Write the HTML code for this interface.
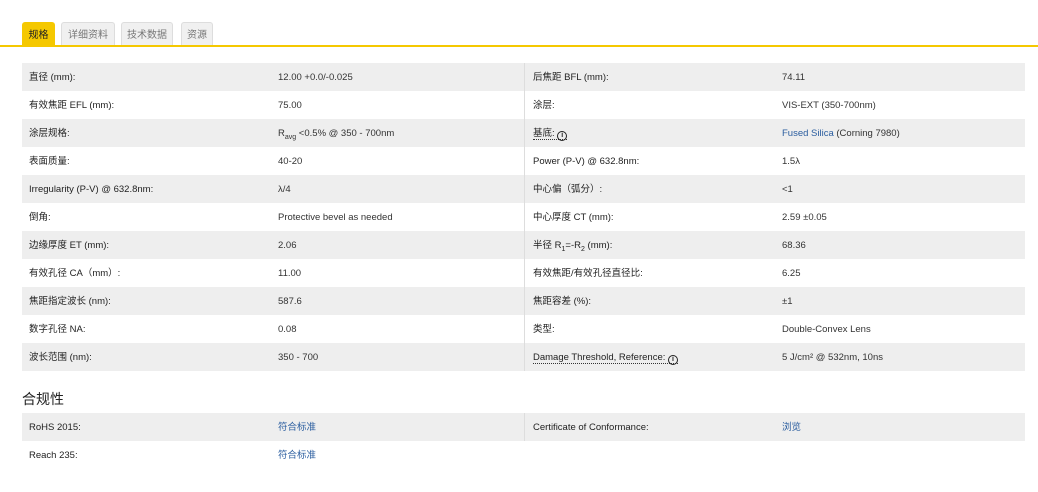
<!DOCTYPE html>
<html><head><meta charset="utf-8"><style>
body{margin:0;background:#fff;width:1038px;height:492px;overflow:hidden;font-family:"Liberation Sans","Noto Sans CJK SC",sans-serif;font-size:9.5px;color:#333}
.tabs{position:absolute;left:0;top:0;width:1038px;height:47px;border-bottom:2px solid #f5c800;box-sizing:border-box}
.tab{position:absolute;top:22px;height:23px;line-height:25px;background:#f0f0f0;border:1px solid #ddd;border-bottom:none;border-radius:3px 3px 0 0;color:#777;font-size:10px;text-align:center;box-sizing:border-box}
.tab.on{background:#f5c800;border-color:#f5c800;color:#222}
table{position:absolute;left:22px;border-collapse:collapse;width:1003px}
td{height:26px;padding:2px 0 0 0;vertical-align:middle;line-height:14px}
tr:nth-child(odd) td{background:#eee}
td.l{padding-left:7px;width:249px;color:#222}
td.v{width:246px}
td.l2{padding-left:8px;width:249px;border-left:1px solid #ddd;color:#222}
a{color:#2a5d9f;text-decoration:none}
.dot{border-bottom:1px dotted #333}
.i{display:inline-block;width:8px;height:8px;border:1.3px solid #222;border-radius:50%;font-size:7px;line-height:8px;text-align:center;font-weight:bold;vertical-align:-1px}
h3{position:absolute;left:22px;top:390px;margin:0;font-size:14px;line-height:18px;font-weight:normal;color:#222}
sub{font-size:7px;line-height:0}
</style></head><body>
<div class="tabs">
<div class="tab on" style="left:22px;width:33px">规格</div>
<div class="tab" style="left:61px;width:54px">详细资料</div>
<div class="tab" style="left:121px;width:52px">技术数据</div>
<div class="tab" style="left:181px;width:32px">资源</div>
</div>
<table style="top:63px">
<tr><td class="l">直径 (mm):</td><td class="v">12.00 +0.0/-0.025</td><td class="l2">后焦距 BFL (mm):</td><td>74.11</td></tr>
<tr><td class="l">有效焦距 EFL (mm):</td><td class="v">75.00</td><td class="l2">涂层:</td><td>VIS-EXT (350-700nm)</td></tr>
<tr><td class="l">涂层规格:</td><td class="v">R<sub>avg</sub> &lt;0.5% @ 350 - 700nm</td><td class="l2"><span class="dot">基底: <span class="i">i</span></span></td><td><a>Fused Silica</a> (Corning 7980)</td></tr>
<tr><td class="l">表面质量:</td><td class="v">40-20</td><td class="l2">Power (P-V) @ 632.8nm:</td><td>1.5λ</td></tr>
<tr><td class="l">Irregularity (P-V) @ 632.8nm:</td><td class="v">λ/4</td><td class="l2">中心偏（弧分）:</td><td>&lt;1</td></tr>
<tr><td class="l">倒角:</td><td class="v">Protective bevel as needed</td><td class="l2">中心厚度 CT (mm):</td><td>2.59 ±0.05</td></tr>
<tr><td class="l">边缘厚度 ET (mm):</td><td class="v">2.06</td><td class="l2">半径 R<sub>1</sub>=-R<sub>2</sub> (mm):</td><td>68.36</td></tr>
<tr><td class="l">有效孔径 CA（mm）:</td><td class="v">11.00</td><td class="l2">有效焦距/有效孔径直径比:</td><td>6.25</td></tr>
<tr><td class="l">焦距指定波长 (nm):</td><td class="v">587.6</td><td class="l2">焦距容差 (%):</td><td>±1</td></tr>
<tr><td class="l">数字孔径 NA:</td><td class="v">0.08</td><td class="l2">类型:</td><td>Double-Convex Lens</td></tr>
<tr><td class="l">波长范围 (nm):</td><td class="v">350 - 700</td><td class="l2"><span class="dot">Damage Threshold, Reference: <span class="i">i</span></span></td><td>5 J/cm² @ 532nm, 10ns</td></tr>
</table>
<h3>合规性</h3>
<table style="top:413px">
<tr><td class="l">RoHS 2015:</td><td class="v"><a>符合标准</a></td><td class="l2">Certificate of Conformance:</td><td><a>浏览</a></td></tr>
<tr><td class="l">Reach 235:</td><td class="v"><a>符合标准</a></td><td class="l2" style="border-left:none"></td><td></td></tr>
</table>
</body></html>
